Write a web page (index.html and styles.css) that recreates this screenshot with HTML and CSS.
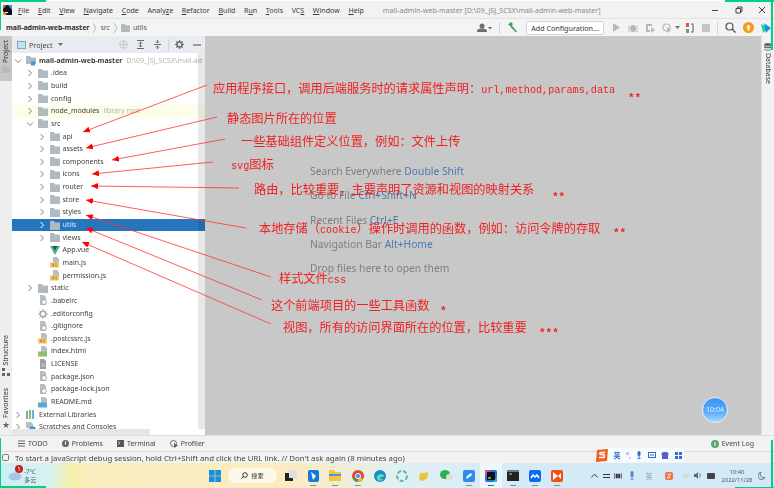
FILE: index.html
```html
<!DOCTYPE html>
<html lang="zh">
<head>
<meta charset="utf-8">
<title>mall-admin-web-master</title>
<link rel="stylesheet" href="styles.css">
</head>
<body>
<svg class="defs" width="0" height="0">
  <defs>
    <symbol id="folder" viewBox="0 0 10 9"><path d="M0 0h4l1 1.500h5V9H0z" fill="#aeb9c0"/></symbol>
    <symbol id="ch-r" viewBox="0 0 8 8"><path d="M2.500 1l3 3-3 3" fill="none" stroke="#7f7f7f" stroke-width="1"/></symbol>
    <symbol id="ch-d" viewBox="0 0 8 8"><path d="M1 2.500l3 3 3-3" fill="none" stroke="#7f7f7f" stroke-width="1"/></symbol>
    <symbol id="file-cfg" viewBox="0 0 10 11"><path d="M2 0h4l2 2v8H2z" fill="#b9bec2"/><circle cx="6" cy="7" r="2.400" fill="#fff" stroke="#8c9296" stroke-width=".8"/></symbol>
    <symbol id="file-js" viewBox="0 0 10 11"><path d="M3 0h4l2 2v4H3z" fill="#b9bec2"/><rect x="0" y="5.500" width="9" height="5" fill="#f4c869"/><path d="M2 7h1.500v2H2M5 7h2M5 9h2" stroke="#8a6a20" stroke-width=".7" fill="none"/></symbol>
    <symbol id="gear" viewBox="0 0 10 10"><circle cx="5" cy="5" r="2.800" fill="none" stroke="#a3a9ad" stroke-width="1.400"/><path d="M5 0v2M5 8v2M0 5h2M8 5h2M1.500 1.500l1.400 1.400M7.100 7.100l1.400 1.400M8.500 1.500L7.100 2.900M2.900 7.100L1.500 8.500" stroke="#a3a9ad"/></symbol>
    <marker id="tip" markerUnits="userSpaceOnUse" markerWidth="8" markerHeight="6" refX="7" refY="3" orient="auto"><path d="M0 0l7 3-7 3z" fill="#f00"/></marker>
  </defs>
</svg>

<div class="app">
  <header class="titlebar">
    <svg class="logo" width="9" height="10" viewBox="0 0 9 10"><rect width="9" height="10" fill="#111"/><path d="M0 0h4L0 4z" fill="#f04a7d"/><path d="M9 0v5L5 0z" fill="#3b8df0"/><path d="M0 10V6l4 4z" fill="#f5a623"/><rect x="2" y="7" width="3" height="1" fill="#fff"/></svg>
    <nav class="menu">
      <span><u>F</u>ile</span><span><u>E</u>dit</span><span><u>V</u>iew</span><span><u>N</u>avigate</span><span><u>C</u>ode</span><span>Analy<u>z</u>e</span><span><u>R</u>efactor</span><span><u>B</u>uild</span><span>R<u>u</u>n</span><span><u>T</u>ools</span><span>VC<u>S</u></span><span><u>W</u>indow</span><span><u>H</u>elp</span>
    </nav>
    <div class="wintitle">mall-admin-web-master [D:\09_JSJ_SCSX\mall-admin-web-master]</div>
    <div class="winctl">
      <svg width="8" height="8" viewBox="0 0 8 8"><path d="M1 4.500h6" stroke="#444"/></svg>
      <svg width="8" height="8" viewBox="0 0 8 8"><path d="M2.500 2.500V1h4.500v4.500H5.500M1 2.500h4.500V7H1z" fill="none" stroke="#444"/></svg>
      <svg width="8" height="8" viewBox="0 0 8 8"><path d="M1 1l6 6M7 1L1 7" stroke="#444"/></svg>
    </div>
  </header>

  <div class="navbar">
    <div class="crumbs">
      <b>mall-admin-web-master</b>
      <svg class="sep" width="5" height="12" viewBox="0 0 5 12"><path d="M1 1l3 5-3 5" fill="none" stroke="#bbb"/></svg>
      <span>src</span>
      <svg class="sep" width="5" height="12" viewBox="0 0 5 12"><path d="M1 1l3 5-3 5" fill="none" stroke="#bbb"/></svg>
      <svg width="9" height="8"><use href="#folder"/></svg>
      <span>utils</span>
    </div>
    <div class="tools-right">
      <svg width="15" height="10" viewBox="0 0 15 10"><circle cx="5" cy="3" r="2.500" fill="#6e6e6e"/><path d="M0 9c0-3 2-3.500 5-3.500S10 6 10 9z" fill="#6e6e6e"/><path d="M11 4h4l-2 2.500z" fill="#6e6e6e"/></svg>
      <i class="vline"></i>
      <svg width="11" height="11" viewBox="0 0 11 11"><path d="M1 2.500L4 0l2 2-2 2.500zM4.500 3l5.500 6.500-1 1L3.500 5" fill="#4d9b57"/></svg>
      <div class="config">Add Configuration...</div>
      <svg width="9" height="9" viewBox="0 0 9 9"><path d="M1 0l7 4.500L1 9z" fill="#b9b9b9"/></svg>
      <svg width="10" height="10" viewBox="0 0 10 10"><ellipse cx="5" cy="5.500" rx="3" ry="3.500" fill="#b9b9b9"/><path d="M0 3l2 1M10 3L8 4M0 6h2M8 6h2M0 9l2-1M10 9L8 8" stroke="#b9b9b9"/></svg>
      <svg width="10" height="10" viewBox="0 0 10 10"><path d="M1 1h6v2H3v4h2v2H1z" fill="#b9b9b9"/><path d="M6 4l4 3-4 3z" fill="#b9b9b9"/></svg>
      <svg width="10" height="10" viewBox="0 0 10 10"><circle cx="4.500" cy="4.500" r="3.500" fill="none" stroke="#b9b9b9" stroke-width="1.200"/><path d="M5 4l4 3-4 3z" fill="#b9b9b9"/></svg>
      <svg class="mini run-mini" width="5" height="3" viewBox="0 0 5 3"><path d="M0 0h5L2.500 3z" fill="#6e6e6e"/></svg>
      <svg width="10" height="10" viewBox="0 0 10 10"><rect x="1" y="0" width="3" height="4" fill="#d9534f"/><rect x="1" y="6" width="3" height="4" fill="#59a869"/><path d="M6 1h2v8H6" fill="none" stroke="#6e6e6e" stroke-width="1.200"/></svg>
      <svg width="8" height="8" viewBox="0 0 8 8"><rect width="8" height="8" fill="#c4c4c4"/></svg>
      <i class="vline"></i>
      <svg width="11" height="11" viewBox="0 0 11 11"><circle cx="4.500" cy="4.500" r="3.500" fill="none" stroke="#555" stroke-width="1.200"/><path d="M7 7l3.500 3.500" stroke="#555" stroke-width="1.400"/></svg>
      <svg width="11" height="11" viewBox="0 0 11 11"><circle cx="5.500" cy="5.500" r="5.500" fill="#f49a1a"/><path d="M5.500 2.500l2.500 3H6.500v3h-2v-3H3z" fill="#fff"/></svg>
      <svg width="10" height="10" viewBox="0 0 10 10"><path d="M0 1l9 3.500L2 10z" fill="#21d789"/><path d="M3 0l7 5-5 5z" fill="#087cfa" opacity=".8"/></svg>
    </div>
  </div>

  <main class="main">
    <aside class="stripe-left">
      <div class="stripe-tab active"><span class="vtext">Project</span><svg width="8" height="7"><use href="#folder"/></svg></div>
      <div class="stripe-spacer"></div>
      <div class="stripe-tab"><span class="vtext">Structure</span><svg width="8" height="8" viewBox="0 0 8 8"><path d="M0 0h3v3H0zM0 5h3v3H0zM5 5h3v3H5z" fill="#666"/></svg></div>
      <div class="stripe-tab fav"><span class="vtext">Favorites</span><span class="star">★</span></div>
    </aside>

    <section class="project">
      <div class="proj-head">
        <svg width="9" height="8" viewBox="0 0 9 8"><rect x=".5" y=".5" width="8" height="7" fill="#bfe3f5" stroke="#8ea3b2"/></svg>
        <span class="proj-title">Project</span>
        <svg class="mini" width="5" height="3" viewBox="0 0 5 3"><path d="M0 0h5L2.500 3z" fill="#6e6e6e"/></svg>
        <div class="proj-actions">
          <svg width="9" height="9" viewBox="0 0 9 9"><circle cx="4.500" cy="4.500" r="3.800" fill="none" stroke="#c2c2c2"/><path d="M4.500 1.500v6M1.500 4.500h6" stroke="#c2c2c2"/></svg>
          <svg width="9" height="9" viewBox="0 0 9 9"><path d="M1 .5h7M1 8.500h7M4.500 2v5M3 3.500l1.500-1.500L6 3.500M3 5.500L4.500 7 6 5.500" fill="none" stroke="#666"/></svg>
          <svg width="9" height="9" viewBox="0 0 9 9"><path d="M1 4.500h7M4.500 0v3M3 1.500l1.500 1.500L6 1.500M4.500 9V6M3 7.500L4.500 6 6 7.500" fill="none" stroke="#666"/></svg>
          <i class="vline tight"></i>
          <svg width="9" height="9" viewBox="0 0 10 10"><circle cx="5" cy="5" r="2.800" fill="none" stroke="#666" stroke-width="1.600"/><path d="M5 0v2M5 8v2M0 5h2M8 5h2M1.500 1.500l1.400 1.400M7.100 7.100l1.400 1.400M8.500 1.500L7.100 2.900M2.900 7.100L1.500 8.500" stroke="#666" stroke-width="1.200"/></svg>
          <svg class="hide" width="8" height="8" viewBox="0 0 8 8"><path d="M0 4h8" stroke="#666" stroke-width="1.200"/></svg>
        </div>
      </div>
      <div class="tree">
        <div class="row lv0"><svg class="chev" width="8" height="8"><use href="#ch-d"/></svg><svg class="ic" width="10" height="10" viewBox="0 0 10 10"><path d="M0 0h4l1 1.500h5V8H0z" fill="#aeb9c0"/><rect x="5" y="5.500" width="4" height="4" fill="#2ba3e0"/></svg><b>mall-admin-web-master</b><span class="dim nowrap">D:\09_JSJ_SCSX\mall-ad</span></div>
        <div class="row lv1"><svg class="chev" width="8" height="8"><use href="#ch-r"/></svg><svg class="ic" width="10" height="9"><use href="#folder"/></svg><span>.idea</span></div>
        <div class="row lv1"><svg class="chev" width="8" height="8"><use href="#ch-r"/></svg><svg class="ic" width="10" height="9"><use href="#folder"/></svg><span>build</span></div>
        <div class="row lv1"><svg class="chev" width="8" height="8"><use href="#ch-r"/></svg><svg class="ic" width="10" height="9"><use href="#folder"/></svg><span>config</span></div>
        <div class="row lv1 lib"><svg class="chev" width="8" height="8"><use href="#ch-r"/></svg><svg class="ic" width="10" height="9"><use href="#folder"/></svg><span>node_modules</span><span class="dim">library root</span></div>
        <div class="row lv1"><svg class="chev" width="8" height="8"><use href="#ch-d"/></svg><svg class="ic" width="10" height="9"><use href="#folder"/></svg><span>src</span></div>
        <div class="row lv2"><svg class="chev" width="8" height="8"><use href="#ch-r"/></svg><svg class="ic" width="10" height="9"><use href="#folder"/></svg><span>api</span></div>
        <div class="row lv2"><svg class="chev" width="8" height="8"><use href="#ch-r"/></svg><svg class="ic" width="10" height="9"><use href="#folder"/></svg><span>assets</span></div>
        <div class="row lv2"><svg class="chev" width="8" height="8"><use href="#ch-r"/></svg><svg class="ic" width="10" height="9"><use href="#folder"/></svg><span>components</span></div>
        <div class="row lv2"><svg class="chev" width="8" height="8"><use href="#ch-r"/></svg><svg class="ic" width="10" height="9"><use href="#folder"/></svg><span>icons</span></div>
        <div class="row lv2"><svg class="chev" width="8" height="8"><use href="#ch-r"/></svg><svg class="ic" width="10" height="9"><use href="#folder"/></svg><span>router</span></div>
        <div class="row lv2"><svg class="chev" width="8" height="8"><use href="#ch-r"/></svg><svg class="ic" width="10" height="9"><use href="#folder"/></svg><span>store</span></div>
        <div class="row lv2"><svg class="chev" width="8" height="8"><use href="#ch-r"/></svg><svg class="ic" width="10" height="9"><use href="#folder"/></svg><span>styles</span></div>
        <div class="row lv2 sel"><svg class="chev" width="8" height="8" viewBox="0 0 8 8"><path d="M2.500 1l3 3-3 3" fill="none" stroke="#fff"/></svg><svg class="ic" width="10" height="9"><use href="#folder"/></svg><span>utils</span></div>
        <div class="row lv2"><svg class="chev" width="8" height="8"><use href="#ch-r"/></svg><svg class="ic" width="10" height="9"><use href="#folder"/></svg><span>views</span></div>
        <div class="row lv2"><i class="chev"></i><svg class="ic" width="10" height="9" viewBox="0 0 10 9"><path d="M0 0h10L5 9z" fill="#41b883"/><path d="M2.500 0h5L5 4.500z" fill="#35495e"/></svg><span>App.vue</span></div>
        <div class="row lv2"><i class="chev"></i><svg class="ic" width="10" height="11"><use href="#file-js"/></svg><span>main.js</span></div>
        <div class="row lv2"><i class="chev"></i><svg class="ic" width="10" height="11"><use href="#file-js"/></svg><span>permission.js</span></div>
        <div class="row lv1"><svg class="chev" width="8" height="8"><use href="#ch-r"/></svg><svg class="ic" width="10" height="9"><use href="#folder"/></svg><span>static</span></div>
        <div class="row lv1"><i class="chev"></i><svg class="ic" width="10" height="11"><use href="#file-cfg"/></svg><span>.babelrc</span></div>
        <div class="row lv1"><i class="chev"></i><svg class="ic" width="10" height="10"><use href="#gear"/></svg><span>.editorconfig</span></div>
        <div class="row lv1"><i class="chev"></i><svg class="ic" width="10" height="11"><use href="#file-cfg"/></svg><span>.gitignore</span></div>
        <div class="row lv1"><i class="chev"></i><svg class="ic" width="10" height="11"><use href="#file-js"/></svg><span>.postcssrc.js</span></div>
        <div class="row lv1"><i class="chev"></i><svg class="ic" width="10" height="11" viewBox="0 0 10 11"><path d="M3 0h4l2 2v4H3z" fill="#b9bec2"/><rect y="5.500" width="9" height="5" fill="#8ec26a"/></svg><span>index.html</span></div>
        <div class="row lv1"><i class="chev"></i><svg class="ic" width="10" height="11" viewBox="0 0 10 11"><path d="M2 0h4l2 2v8H2z" fill="#9aa0a4"/><path d="M3 5h4M3 7h4" stroke="#e8e8e8" stroke-width=".6"/></svg><span>LICENSE</span></div>
        <div class="row lv1"><i class="chev"></i><svg class="ic" width="10" height="11"><use href="#file-cfg"/></svg><span>package.json</span></div>
        <div class="row lv1"><i class="chev"></i><svg class="ic" width="10" height="11"><use href="#file-cfg"/></svg><span>package-lock.json</span></div>
        <div class="row lv1"><i class="chev"></i><svg class="ic" width="10" height="11" viewBox="0 0 10 11"><path d="M3 0h4l2 2v4H3z" fill="#b9bec2"/><rect y="5.500" width="9" height="5" fill="#55a9d6"/></svg><span>README.md</span></div>
        <div class="row lv0"><svg class="chev" width="8" height="8"><use href="#ch-r"/></svg><svg class="ic" width="10" height="9" viewBox="0 0 10 9"><path d="M0 1h2v8H0z" fill="#9aa0a4"/><path d="M3 0h2v9H3z" fill="#7cc07a"/><path d="M6 0h2v9H6z" fill="#66b4dc"/></svg><span>External Libraries</span></div>
        <div class="row lv0"><svg class="chev" width="8" height="8"><use href="#ch-r"/></svg><svg class="ic" width="10" height="11" viewBox="0 0 10 11"><path d="M0 0h5l2 2v4H0z" fill="#b9bec2"/><circle cx="6.500" cy="7.500" r="3.200" fill="#2ba3e0"/></svg><span>Scratches and Consoles</span></div>
      </div>
      <div class="vscroll"></div>
      <div class="hscroll"></div>
    </section>

    <section class="editor">
      <p>Search Everywhere <em>Double Shift</em></p>
      <p>Go to File <em>Ctrl+Shift+N</em></p>
      <p>Recent Files <em>Ctrl+E</em></p>
      <p>Navigation Bar <em>Alt+Home</em></p>
      <p>Drop files here to open them</p>
    </section>

    <aside class="stripe-right">
      <svg width="8" height="8" viewBox="0 0 8 8"><ellipse cx="4" cy="1.500" rx="4" ry="1.500" fill="#666"/><path d="M0 3c1 1 7 1 8 0v1.500c-1 1-7 1-8 0zM0 6c1 1 7 1 8 0v.5C7 8 1 8 0 6.500z" fill="#666"/></svg>
      <span class="vtext-r">Database</span>
    </aside>
  </main>

  <div class="toolbar">
    <span class="tw"><svg width="7" height="7" viewBox="0 0 7 7"><path d="M0 1h7M0 3.500h7M0 6h7" stroke="#666"/></svg>TODO</span>
    <span class="tw"><svg width="7" height="7" viewBox="0 0 7 7"><circle cx="3.500" cy="3.500" r="3.500" fill="#666"/><rect x="3" y="1.500" width="1" height="3" fill="#fff"/></svg>Problems</span>
    <span class="tw"><svg width="7" height="7" viewBox="0 0 7 7"><rect width="7" height="7" fill="#555"/><path d="M1 1.500l2 1.500-2 1.500" stroke="#fff" fill="none" stroke-width=".6"/></svg>Terminal</span>
    <span class="tw"><svg width="8" height="8" viewBox="0 0 8 8"><circle cx="3.500" cy="3.500" r="3" fill="none" stroke="#666"/><path d="M4 3l4 2.500L4 8z" fill="#666"/></svg>Profiler</span>
    <span class="tw event"><svg width="8" height="8" viewBox="0 0 8 8"><circle cx="4" cy="4" r="4" fill="#59a869"/><rect x="3.500" y="2" width="1" height="4" fill="#fff"/></svg>Event Log</span>
  </div>

  <div class="status">
    <svg width="7" height="7" viewBox="0 0 7 7"><rect x=".5" y=".5" width="6" height="6" rx="1" fill="none" stroke="#777"/></svg>
    <span>To start a JavaScript debug session, hold Ctrl+Shift and click the URL link. // Don't ask again (8 minutes ago)</span>
  </div>

  <footer class="taskbar">
    <div class="weather">
      <svg width="14" height="11" viewBox="0 0 14 11"><ellipse cx="7" cy="6.500" rx="6.500" ry="4" fill="#a9c6e8"/></svg>
      <div class="wtext"><span>-7℃</span><span>多云</span></div>
    </div>
    <div class="center">
      <svg class="win" width="12" height="12" viewBox="0 0 12 12"><path d="M0 0h5.700v5.700H0zM6.300 0H12v5.700H6.300zM0 6.300h5.700V12H0zM6.300 6.300H12V12H6.300z" fill="#1b8fd6"/></svg>
      <div class="search"><svg width="7" height="7" viewBox="0 0 7 7"><circle cx="4" cy="3" r="2.300" fill="none" stroke="#333"/><path d="M2.500 4.500L.5 6.500" stroke="#333"/></svg><span>搜索</span></div>
      <div class="apps">
        <span class="app-ic"><svg width="12" height="11" viewBox="0 0 12 11"><rect y="3" width="8" height="8" fill="#222"/><rect x="4" width="8" height="8" fill="#ddd"/></svg></span>
        <span class="app-ic on"><svg width="11" height="12" viewBox="0 0 11 12"><rect width="11" height="12" rx="2" fill="#1679d8"/><path d="M3 2l5 4-3 4z" fill="#fff"/></svg></span>
        <span class="app-ic on"><svg width="12" height="11" viewBox="0 0 12 11"><path d="M0 0h5l1 2h6v9H0z" fill="#f5c542"/><rect y="4" width="12" height="2" fill="#3a9be0"/></svg></span>
        <span class="app-ic on"><svg width="12" height="12" viewBox="0 0 12 12"><circle cx="6" cy="6" r="6" fill="#e8453c"/><path d="M6 6L1 9a6 6 0 0 0 6 3z" fill="#34a853"/><path d="M6 6l5 3a6 6 0 0 1-5 3z" fill="#fbbc05"/><circle cx="6" cy="6" r="2.500" fill="#4285f4" stroke="#fff"/></svg></span>
        <span class="app-ic"><svg width="12" height="12" viewBox="0 0 12 12"><circle cx="6" cy="6" r="6" fill="#1b8ad0"/><path d="M3 7c1-4 7-4 7 0H6c0 2 2 3 4 2-2 3-8 2-7-2z" fill="#5fe0a8"/></svg></span>
        <span class="app-ic"><svg width="12" height="12" viewBox="0 0 12 12"><circle cx="6" cy="6" r="5" fill="none" stroke="#61b8a8" stroke-width="2" stroke-dasharray="4 2"/></svg></span>
        <span class="app-ic"><svg width="12" height="12" viewBox="0 0 12 12"><path d="M3 2c2 3 4 0 7 0 1 4-2 9-6 9-3 0-4-4-1-9z" fill="#eec341"/></svg></span>
        <span class="app-ic"><svg width="13" height="11" viewBox="0 0 13 11"><ellipse cx="5" cy="4.500" rx="5" ry="4.500" fill="#2bb24c"/><ellipse cx="9.500" cy="7" rx="3.500" ry="3" fill="#ddd"/></svg></span>
        <span class="app-ic on"><svg width="12" height="12" viewBox="0 0 12 12"><rect width="12" height="12" rx="2" fill="#2d8cf0"/><path d="M3 9l1-3 4-3 1 2-4 3z" fill="#fff"/></svg></span>
        <span class="app-ic on active"><svg width="12" height="12" viewBox="0 0 12 12"><rect width="12" height="12" rx="2" fill="#2b6fe0"/><path d="M0 0h5L0 6z" fill="#f04a7d"/><path d="M12 12V6l-4 6z" fill="#17b8d8"/><rect x="2" y="2" width="8" height="8" fill="#111"/><rect x="3" y="7.500" width="3" height="1" fill="#fff"/></svg></span>
        <span class="app-ic on"><svg width="12" height="11" viewBox="0 0 12 11"><rect width="12" height="11" fill="#222"/><rect width="12" height="2" fill="#777"/><path d="M2 4h3" stroke="#ccc"/></svg></span>
        <span class="app-ic on"><svg width="12" height="12" viewBox="0 0 12 12"><rect width="12" height="12" rx="2" fill="#0a6cf0"/><path d="M2 8l2-3 2 2 2-2 2 3" fill="none" stroke="#fff" stroke-width="1.500"/></svg></span>
        <span class="app-ic on"><svg width="12" height="12" viewBox="0 0 12 12"><rect width="12" height="12" rx="2" fill="#ef4f10"/><path d="M2 2l5 4-5 4zM7 6l3-3v6z" fill="#fff"/></svg></span>
      </div>
    </div>
    <div class="tray">
      <svg width="7" height="5" viewBox="0 0 7 5"><path d="M.5 4.500l3-3.500 3 3.500" fill="none" stroke="#444"/></svg>
      <svg width="7" height="6" viewBox="0 0 7 6"><path d="M0 1.500h7M0 4.500h7" stroke="#333" stroke-width="1.200"/></svg>
      <svg width="8" height="6" viewBox="0 0 8 6"><path d="M.5 0v6M7.500 0v6M2 1h1.500v4H2zM4.500 1H6v4H4.500z" fill="#333" stroke="#333" stroke-width=".6"/></svg>
      <svg width="6" height="9" viewBox="0 0 6 9"><rect x="1.500" width="3" height="6" rx="1.500" fill="#5a86c8"/><path d="M3 6v3M1 9h4" stroke="#5a86c8"/></svg>
      <span class="tray-cn">英</span>
      <svg width="8" height="8" viewBox="0 0 8 8"><rect width="8" height="8" rx="2" fill="#ee7443"/><path d="M2 5.500c2 1 4 0 2-1.500s0-2.500 2-1.500" fill="none" stroke="#fff"/></svg>
      <svg width="8" height="6" viewBox="0 0 8 6"><path d="M0 2c2-2 6-2 8 0L4 6z" fill="#d5d9dc"/></svg>
      <svg width="8" height="7" viewBox="0 0 8 7"><path d="M0 2h2l2-2v7L2 5H0z" fill="#666"/><path d="M5.500 1.500c1 1 1 3 0 4" stroke="#666" fill="none"/></svg>
      <svg width="8" height="6" viewBox="0 0 8 6"><rect width="8" height="6" rx="1" fill="#444"/></svg>
      <div class="clock"><span>10:40</span><span>2022/11/28</span></div>
      <svg width="7" height="8" viewBox="0 0 7 8"><path d="M3 0c-2 3 0 6 4 5.500C6 8 0 8.500 0 4 0 2 1 .5 3 0z" fill="none" stroke="#555" stroke-width=".8"/></svg>
    </div>
  </footer>
</div>

<div class="badge-dot">1</div>
<div class="timer">10:04</div>
<div class="ime">
  <svg width="12" height="13" viewBox="0 0 12 13"><path d="M1 1l11-1-1 12-11 1z" fill="#f25d22"/><path d="M9 3.500H4.500c-1 0-1 2 0 2h3c1.200 0 1.200 3 0 3H3" fill="none" stroke="#fff" stroke-width="1.400"/></svg>
  <span class="ime-cn">英</span>
  <span class="ime-dot">°,</span>
  <svg width="6" height="8" viewBox="0 0 6 8"><rect x="1.500" width="3" height="5" rx="1.500" fill="#2c6fc4"/><path d="M3 5v3M1 8h4" stroke="#2c6fc4"/></svg>
  <svg width="8" height="6" viewBox="0 0 8 6"><rect x=".5" y=".5" width="7" height="5" fill="none" stroke="#2c6fc4"/><path d="M2 3h4" stroke="#2c6fc4"/></svg>
  <svg width="8" height="7" viewBox="0 0 8 7"><path d="M2 0h4l2 2-1 1v4H1V3L0 2z" fill="#5a5fc8"/></svg>
  <svg width="7" height="7" viewBox="0 0 7 7"><path d="M0 0h3v3H0zM4 0h3v3H4zM0 4h3v3H0zM4 4h3v3H4z" fill="#2c6fc4"/></svg>
</div>

<svg class="arrows" width="774" height="488" viewBox="0 0 774 488">
  <g stroke="#f33" stroke-width=".8" fill="none" marker-end="url(#tip)">
    <path d="M207 85L83 132"/>
    <path d="M217 117L86 148"/>
    <path d="M225 139L112 160"/>
    <path d="M213 162L92 174"/>
    <path d="M239 188L91 186"/>
    <path d="M246 228L86 200"/>
    <path d="M271 277L86 215"/>
    <path d="M262 300L86 228"/>
    <path d="M271 324L82 242"/>
  </g>
</svg>

<div class="note n1">应用程序接口，调用后端服务时的请求属性声明：<span class="mono">url,method,params,data</span></div>
<div class="note star-note s1">**</div>
<div class="note n2">静态图片所在的位置</div>
<div class="note n3">一些基础组件定义位置，例如：文件上传</div>
<div class="note n4"><span class="mono">svg</span>图标</div>
<div class="note n5">路由，比较重要，主要声明了资源和视图的映射关系</div>
<div class="note star-note s5">**</div>
<div class="note n6">本地存储（<span class="mono">cookie</span>）操作时调用的函数，例如：访问令牌的存取</div>
<div class="note star-note s6">**</div>
<div class="note n7">样式文件<span class="mono">css</span></div>
<div class="note n8">这个前端项目的一些工具函数</div>
<div class="note star-note s8">*</div>
<div class="note n9">视图，所有的访问界面所在的位置，比较重要</div>
<div class="note star-note s9">***</div>

<div class="cap cap-tl"></div>
<div class="cap cap-tr"></div>
<div class="cap cap-bl"></div>
<div class="cap cap-br"></div>
</body>
</html>
```

FILE: styles.css
```css
* { box-sizing: border-box; }
html, body { margin: 0; padding: 0; }
body {
  width: 774px;
  height: 488px;
  overflow: hidden;
  position: relative;
  background: #fff;
  font-family: "Noto Sans", "Noto Sans CJK SC", sans-serif;
  font-size: 7px;
  color: #333;
  filter: blur(.3px);
}
svg { flex: none; display: block; }
.defs { position: absolute; }
.app { display: flex; flex-direction: column; height: 488px; }
.vline { width: 1px; height: 12px; background: #d4d4d4; flex: none; }
.vline.tight { margin: 0 -2px; }
.mini { margin-left: 3px; }

/* title bar */
.titlebar {
  height: 18px;
  flex: none;
  display: flex;
  align-items: center;
  padding: 0 8px 0 3px;
  background: #f2f2f2;
  border-top: 1px solid #fff;
}
.menu { display: flex; gap: 8.6px; margin-left: 6px; font-size: 7.1px; color: #3a3a3a; white-space: nowrap; }
.menu u { text-decoration-thickness: .5px; text-underline-offset: 1px; }
.wintitle { margin-left: 19px; color: #8a8a8a; font-size: 7.1px; white-space: nowrap; }
.winctl { margin-left: auto; display: flex; gap: 15.5px; }

/* nav bar */
.navbar {
  height: 18px;
  flex: none;
  display: flex;
  align-items: center;
  justify-content: space-between;
  padding: 0 3px 0 6px;
  background: #f4f4f4;
  border-top: 1px solid #e2e2e2;
}
.crumbs { display: flex; align-items: center; gap: 3px; color: #555; font-size: 7px; }
.crumbs b { color: #2f2f2f; font-size: 7px; }
.tools-right { display: flex; align-items: center; gap: 7px; }
.run-mini { margin: 0 -2px 0 -4px; }
.config {
  width: 78px;
  height: 14px;
  display: flex;
  align-items: center;
  justify-content: center;
  background: #fff;
  border: 1px solid #d4d4d4;
  border-radius: 2px;
  font-size: 7.2px;
  color: #333;
  margin: 0 1px;
}

/* main area */
.main { flex: 1; min-height: 0; display: flex; }
.stripe-left {
  width: 12px;
  flex: none;
  display: flex;
  flex-direction: column;
  background: #eeeeee;
  padding-bottom: 5px;
}
.stripe-spacer { flex: 1; }
.stripe-tab {
  display: flex;
  flex-direction: column;
  align-items: center;
  gap: 3px;
}
.stripe-tab.active { background: #c6c6c6; height: 45px; padding-top: 4px; margin-bottom: 0; }
.stripe-tab.fav { margin-top: 12px; }
.vtext { writing-mode: vertical-rl; transform: rotate(180deg); font-size: 7px; line-height: 10px; color: #333; }
.star { font-size: 9px; line-height: 9px; color: #666; font-family: "DejaVu Sans", sans-serif; }

.project { width: 193px; flex: none; position: relative; background: #fff; display: flex; flex-direction: column; }
.proj-head {
  height: 17px;
  flex: none;
  display: flex;
  align-items: center;
  gap: 3px;
  padding: 0 4px 0 5px;
  background: #e8ecf2;
  font-size: 7.2px;
}
.proj-title { color: #444; }
.proj-actions { margin-left: auto; display: flex; align-items: center; gap: 8px; }
.hide { margin-left: 1.5px; }

.tree { flex: 1; padding-top: 1.4px; overflow: hidden; }
.row {
  height: 12.655px;
  display: flex;
  align-items: center;
  white-space: nowrap;
  color: #3f3f3f;
  line-height: 12px;
}
.chev { width: 8px; height: 8px; margin-right: 4px; flex: none; }
.ic { margin-right: 3px; }
.lv0 { padding-left: 2px; }
.lv1 { padding-left: 14px; }
.lv2 { padding-left: 25.5px; }
.dim { color: #b4b4b4; margin-left: 4px; }
.nowrap { overflow: hidden; }
.lib { background: #fdfde9; }
.sel { background: #2675bf; color: #dfeaf5; }
.vscroll { position: absolute; top: 17px; bottom: 6px; right: 0; width: 7px; background: rgba(0, 0, 0, .09); }
.hscroll { position: absolute; bottom: 0; left: 0; width: 138px; height: 6px; background: #e6e6e6; }

.editor {
  flex: 1;
  background: #c8c8c8;
  padding: 128px 0 0 105px;
  display: flex;
  flex-direction: column;
  font-size: 10.3px;
  color: #7f7f7f;
}
.editor p { margin: 0; height: 24.3px; line-height: 14px; white-space: nowrap; }
.editor em { font-style: normal; color: #4a7bb0; }

.stripe-right {
  width: 13px;
  flex: none;
  background: #f2f2f2;
  border-left: 1px solid #e0e0e0;
  display: flex;
  flex-direction: column;
  align-items: center;
  gap: 2px;
  padding-top: 7px;
}
.vtext-r { writing-mode: vertical-rl; font-size: 7px; color: #333; line-height: 10px; }

/* bottom bars */
.toolbar {
  height: 16px;
  flex: none;
  display: flex;
  align-items: center;
  gap: 14px;
  padding: 0 20px 0 18px;
  background: #f2f2f2;
  border-top: 1px solid #dedede;
  font-size: 7px;
  color: #444;
}
.tw { display: flex; align-items: center; gap: 3px; }
.event { margin-left: auto; }
.status {
  height: 12px;
  flex: none;
  display: flex;
  align-items: center;
  gap: 6px;
  padding-left: 2px;
  background: #f2f2f2;
  border-top: 1px solid #dcdcdc;
  font-size: 7.8px;
  color: #444;
  white-space: nowrap;
}
.taskbar {
  height: 25px;
  flex: none;
  display: flex;
  align-items: center;
  padding: 0 8px 0 8px;
  background: linear-gradient(90deg, #cdeef8 0, #d6f2ee 50px, #f4f0a8 72px, #faeec0 90px, #faebc4 300px, #dff0f4 400px, #d6ebf8 520px, #d4e9f7 774px);
}
.weather { width: 31px; display: flex; align-items: center; gap: 2px; flex: none; }
.wtext { display: flex; flex-direction: column; font-size: 6.2px; line-height: 8px; color: #555; }
.center { display: flex; align-items: center; margin-left: 170px; }
.win { margin-right: 7px; }
.search {
  width: 49px;
  height: 15px;
  border-radius: 8px;
  background: #fdf9ea;
  display: flex;
  align-items: center;
  justify-content: center;
  gap: 3px;
  font-size: 6.2px;
  color: #333;
}
.apps { display: flex; margin-left: 3px; }
.app-ic {
  width: 22.2px;
  height: 25px;
  display: flex;
  align-items: center;
  justify-content: center;
  position: relative;
}
.app-ic.on::after {
  content: "";
  position: absolute;
  bottom: 2px;
  left: 8px;
  width: 6px;
  height: 1px;
  background: #8b8b8b;
}
.app-ic.active { background: rgba(255, 255, 255, .55); }
.app-ic.active::after { background: #1679d8; height: 1.5px; }
.tray {
  margin-left: auto;
  display: grid;
  grid-template-columns: 12px 12px 12px 16px 18px 22px 12px 12px 14px 38px 10px;
  justify-items: center;
  align-items: center;
  color: #555;
}
.tray-cn { font-size: 7px; color: #999; }
.clock { display: flex; flex-direction: column; align-items: center; font-size: 5.8px; line-height: 8px; color: #555; }

/* overlays */
.badge-dot {
  position: absolute;
  left: 15px;
  top: 465px;
  width: 8px;
  height: 8px;
  border-radius: 50%;
  background: #c8201a;
  color: #fff;
  font-size: 6px;
  line-height: 8px;
  text-align: center;
}
.timer {
  position: absolute;
  left: 702px;
  top: 397px;
  width: 26px;
  height: 26px;
  border-radius: 50%;
  border: 1.5px solid #e6eef6;
  background: linear-gradient(180deg, #3a94f6 0, #5cacf9 60%, #a4dcfb 100%);
  color: #e4f1ff;
  font-size: 7px;
  line-height: 23px;
  text-align: center;
}
.ime {
  position: absolute;
  left: 595px;
  top: 448px;
  width: 89px;
  height: 14px;
  display: flex;
  align-items: center;
  gap: 5.5px;
  padding-left: 1px;
  background: linear-gradient(90deg, transparent 0, transparent 11px, #f7fbfe 11px);
}
.ime-cn { font-size: 7px; color: #2c6fc4; font-weight: 700; }
.ime-dot { font-size: 7px; color: #2c6fc4; }
.arrows { position: absolute; left: 0; top: 0; pointer-events: none; }

.note {
  position: absolute;
  font-family: "Noto Sans CJK SC", sans-serif;
  font-size: 12.2px;
  line-height: 14px;
  height: 14px;
  color: #f02020;
  white-space: nowrap;
}
.mono { font-family: "Liberation Mono", monospace; font-size: 10.17px; }
.star-note { font-family: "Liberation Mono", monospace; font-size: 11px; font-weight: 700; }
.n1 { left: 213px; top: 81px; }
.s1 { left: 628px; top: 91px; }
.n2 { left: 227px; top: 111px; }
.n3 { left: 241px; top: 134px; }
.n4 { left: 231px; top: 157px; }
.n5 { left: 254px; top: 182px; }
.s5 { left: 552px; top: 190px; }
.n6 { left: 259px; top: 221px; }
.s6 { left: 613px; top: 226px; }
.n7 { left: 279px; top: 271px; }
.n8 { left: 271px; top: 298px; }
.s8 { left: 440px; top: 304px; }
.n9 { left: 283px; top: 320px; }
.s9 { left: 539px; top: 326px; }

.cap { position: absolute; background: #00d084; }
.cap-tl { left: 0; top: 0; width: 46px; height: 2px; }
.cap-tl::after { content: ""; position: absolute; left: 0; top: 0; width: 1px; height: 30px; background: #00d084; }
.cap-tr { right: 0; top: 0; width: 49px; height: 2px; }
.cap-tr::after { content: ""; position: absolute; right: 1px; top: 0; width: 2px; height: 50px; background: #00d084; }
.cap-bl { left: 0; bottom: 0; width: 46px; height: 2px; }
.cap-bl::after { content: ""; position: absolute; left: 0; bottom: 0; width: 1px; height: 50px; background: #00d084; }
.cap-br { right: 0; bottom: 0; width: 39px; height: 1px; }
.cap-br::after { content: ""; position: absolute; right: 1px; bottom: 0; width: 2px; height: 48px; background: #00d084; }
```
